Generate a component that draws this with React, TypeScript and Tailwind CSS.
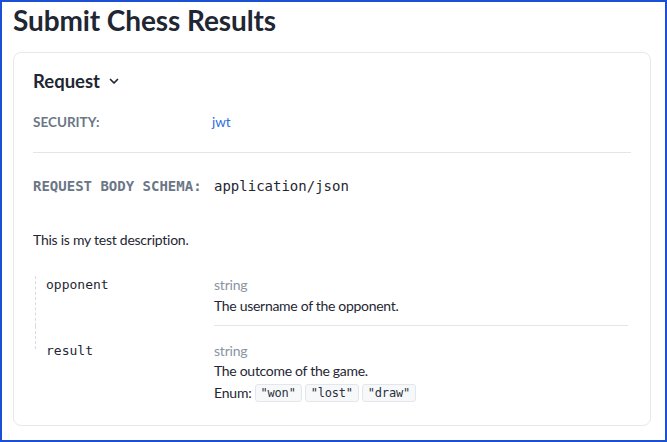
import React from "react";

const sans = { fontFamily: "Lato, 'Noto Sans', sans-serif" };
const mono = { fontFamily: "'DejaVu Sans Mono', 'Liberation Mono', monospace" };

function Chip({ children }: { children: React.ReactNode }) {
  return (
    <span
      className="inline-flex h-[18px] items-center rounded-[3px] border border-[#e3e7ec] bg-[#f6f8fa] px-[5px] text-[12px] text-[#2b323b]"
      style={mono}
    >
      {children}
    </span>
  );
}

export default function App() {
  return (
    <div
      className="box-border h-[442px] w-[667px] overflow-hidden border-2 border-[#1a4fd6] bg-white pl-[11px] pr-[14px]"
      style={sans}
    >
      <h1 className="mt-[1px] text-[28px] font-bold leading-[34px] tracking-[-0.1px] text-[#1f2733]">
        Submit Chess Results
      </h1>
      <div className="mt-[15px] h-[374px] rounded-[8px] border border-[#e6e8eb] px-[19px] pt-[16px]">
        <div className="flex items-center gap-[8px]">
          <span className="text-[18.5px] font-bold leading-[24px] text-[#1f2733]">Request</span>
          <svg width="12" height="12" viewBox="0 0 12 12" fill="none" stroke="#1f2733" strokeWidth="1.7" strokeLinecap="round" strokeLinejoin="round">
            <path d="M2.5 4.5 6 8 9.5 4.5" />
          </svg>
        </div>
        <div className="mt-[20px] flex items-center text-[13.5px] leading-[18px]">
          <span className="w-[179px] font-bold text-[#6b7686]">SECURITY:</span>
          <span className="text-[#2f6ee0]">jwt</span>
        </div>
        <div className="mt-[21px] border-t border-[#e3e5e8]" />
        <div className="mt-[24px] flex items-center text-[14px] leading-[18px]" style={mono}>
          <span className="w-[181px] font-bold text-[#6b7686]">REQUEST BODY SCHEMA:</span>
          <span className="text-[#1f2733]">application/json</span>
        </div>
        <p className="mt-[36px] text-[14px] leading-[18px] tracking-[-0.25px] text-[#1f2733]">
          This is my test description.
        </p>
        <div className="mt-[27px] flex flex-col pr-[3px]">
          <div className="flex">
            <div className="ml-[2px] flex w-[179px] shrink-0 border-l border-dashed border-[#d8dbe0] pl-[10px]" style={mono}>
              <span className="text-[13px] leading-[18px] text-[#1f2733]">opponent</span>
            </div>
            <div className="flex-1 border-b border-[#e3e5e8] pb-[10px]">
              <div className="text-[14px] leading-[18px] tracking-[-0.2px] text-[#8a94a3]">string</div>
              <div className="mt-[3px] text-[14px] leading-[18px] tracking-[-0.3px] text-[#1f2733]">
                The username of the opponent.
              </div>
            </div>
          </div>
          <div className="flex">
            <div className="ml-[2px] w-[179px] shrink-0">
              <div className="h-[23px] border-l border-dashed border-[#d8dbe0] pl-[10px] pt-[16px]" style={mono}>
                <span className="block text-[13px] leading-[18px] text-[#1f2733]">result</span>
              </div>
            </div>
            <div className="flex-1 pt-[16px]">
              <div className="text-[14px] leading-[18px] tracking-[-0.2px] text-[#8a94a3]">string</div>
              <div className="mt-[2px] text-[14px] leading-[18px] tracking-[-0.3px] text-[#1f2733]">
                The outcome of the game.
              </div>
              <div className="mt-[4px] flex items-center gap-[3px] text-[14px] leading-[18px] tracking-[-0.2px] text-[#1f2733]">
                <span>Enum:</span>
                <Chip>"won"</Chip>
                <Chip>"lost"</Chip>
                <Chip>"draw"</Chip>
              </div>
            </div>
          </div>
        </div>
      </div>
    </div>
  );
}
